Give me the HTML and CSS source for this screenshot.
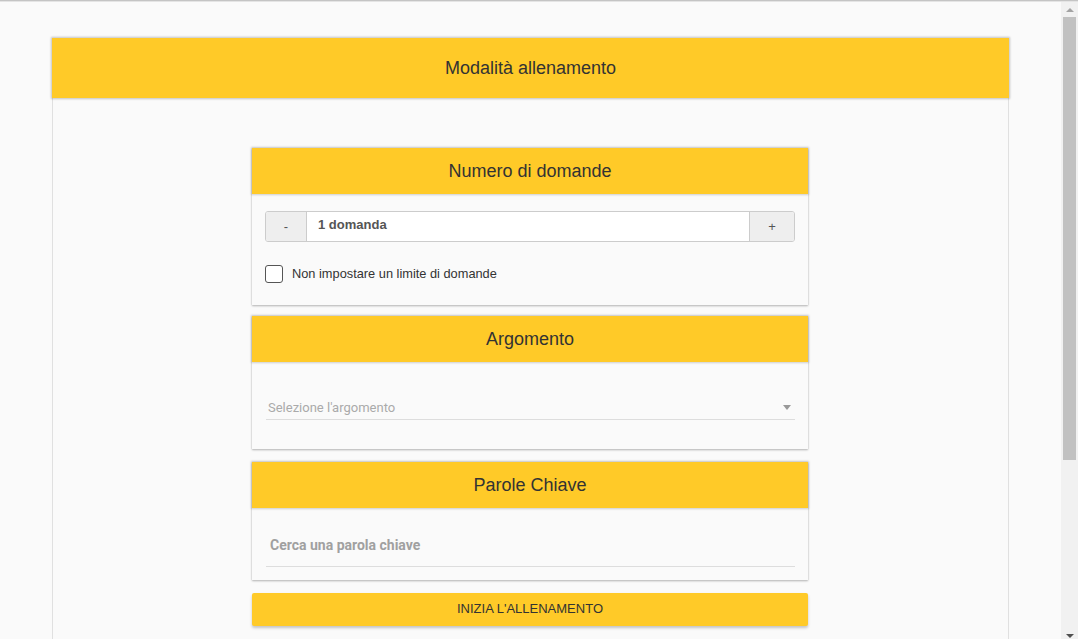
FILE: index.html
```html
<!DOCTYPE html>
<html lang="it">
<head>
<meta charset="utf-8">
<title>Modalità allenamento</title>
<link rel="stylesheet" href="styles.css">
</head>
<body>
<div class="topline"></div>
<div class="viewport">
  <main class="main">
    <section class="outer">
      <header class="outer-head">Modalità allenamento</header>
      <div class="outer-body">
        <div class="column">
          <section class="card">
            <header class="card-head">Numero di domande</header>
            <div class="card-body body-num">
              <div class="input-group">
                <button class="ig-btn ig-minus">-</button>
                <div class="ig-field">1 domanda</div>
                <button class="ig-btn ig-plus">+</button>
              </div>
              <label class="check-row">
                <span class="checkbox"></span>
                <span class="check-label">Non impostare un limite di domande</span>
              </label>
            </div>
          </section>
          <section class="card card-gap">
            <header class="card-head">Argomento</header>
            <div class="card-body body-arg">
              <div class="select">
                <span class="select-text">Selezione l'argomento</span>
                <span class="caret"></span>
              </div>
            </div>
          </section>
          <section class="card card-gap2">
            <header class="card-head">Parole Chiave</header>
            <div class="card-body body-key">
              <div class="search">Cerca una parola chiave</div>
            </div>
          </section>
          <button class="start">INIZIA L'ALLENAMENTO</button>
        </div>
      </div>
    </section>
  </main>
  <aside class="scrollbar">
    <span class="sb-up"></span>
    <span class="sb-thumb"></span>
    <span class="sb-fill"></span>
    <span class="sb-down"></span>
  </aside>
</div>
</body>
</html>
```
FILE: styles.css
```css
html, body {
  margin: 0;
  padding: 0;
  height: 639px;
  overflow: hidden;
}
body {
  background: #fafafa;
  font-family: "Liberation Sans", Arial, sans-serif;
  color: #333;
  display: flex;
  flex-direction: column;
}
.topline {
  height: 1px;
  border-top: 1px solid #c4c4c4;
  background: #e4e4e4;
  flex: none;
}
.viewport {
  flex: 1;
  display: flex;
  min-height: 0;
}
.main {
  flex: 1;
  padding: 36px 52px 0 52px;
  overflow: hidden;
}
.outer {
  display: flex;
  flex-direction: column;
  height: 100%;
}
.outer-head {
  height: 60px;
  background: #ffca28;
  display: flex;
  align-items: center;
  justify-content: center;
  font-size: 18px;
  color: #333;
  box-shadow: 0 0 2px 1px rgba(0,0,0,0.22);
  position: relative;
  z-index: 1;
}
.outer-body {
  flex: 1;
  border-left: 1px solid #e0e0e0;
  border-right: 1px solid #e0e0e0;
  padding-top: 50px;
}
.column {
  width: 556px;
  margin-left: 199px;
  display: flex;
  flex-direction: column;
}
.card {
  background: #fafafa;
  box-shadow: 0 1px 2px rgba(0,0,0,0.28), 0 0 1px rgba(0,0,0,0.12);
}
.card-gap { margin-top: 11px; }
.card-gap2 { margin-top: 13px; }
.card-head {
  height: 46px;
  background: #ffca28;
  display: flex;
  align-items: center;
  justify-content: center;
  font-size: 18px;
  color: #333;
  box-shadow: 0 0 2px 1px rgba(0,0,0,0.18);
  position: relative;
}
.card-body {
  padding: 0 13px;
}
.body-num {
  padding-top: 17px;
  padding-bottom: 22px;
}
.input-group {
  display: flex;
  height: 31px;
  border: 1px solid #ccc;
  border-radius: 3px;
  box-sizing: border-box;
  background: #fff;
  overflow: hidden;
}
.ig-btn {
  border: none;
  background: #eee;
  color: #555;
  font-family: "Liberation Sans", Arial, sans-serif;
  font-size: 13px;
  padding: 0;
  margin: 0;
}
.ig-minus {
  width: 41px;
  border-right: 1px solid #ccc;
}
.ig-plus {
  width: 45px;
  border-left: 1px solid #ccc;
}
.ig-field {
  flex: 1;
  display: flex;
  align-items: center;
  padding-left: 11px;
  padding-bottom: 4px;
  font-size: 13px;
  font-weight: bold;
  color: #555;
}
.check-row {
  display: flex;
  align-items: center;
  margin-top: 23px;
  height: 18px;
}
.checkbox {
  width: 18px;
  height: 18px;
  box-sizing: border-box;
  border: 1.5px solid #555;
  border-radius: 3px;
  background: #fff;
}
.check-label {
  margin-left: 9px;
  font-size: 12.8px;
  color: #333;
  margin-top: -1px;
}
.body-arg {
  padding-top: 36px;
  padding-bottom: 29px;
  padding-left: 14px;
}
.select {
  height: 22px;
  box-sizing: border-box;
  border-bottom: 1px solid #ddd;
  display: flex;
  align-items: center;
  justify-content: space-between;
  padding-left: 2px;
  padding-bottom: 2px;
}
.select-text {
  font-family: Roboto, "Liberation Sans", sans-serif;
  font-size: 13px;
  color: #aaa;
}
.caret {
  width: 0;
  height: 0;
  border-left: 4px solid transparent;
  border-right: 4px solid transparent;
  border-top: 5px solid #999;
  margin-right: 4px;
}
.body-key {
  padding-top: 24px;
  padding-bottom: 13px;
  padding-left: 14px;
}
.search {
  height: 35px;
  box-sizing: border-box;
  border-bottom: 1px solid #ddd;
  display: flex;
  align-items: center;
  padding-left: 4px;
  padding-bottom: 8px;
  font-family: Roboto, "Liberation Sans", sans-serif;
  font-size: 14px;
  font-weight: bold;
  color: #a0a0a0;
}
.start {
  margin-top: 13px;
  height: 33px;
  border: none;
  border-radius: 2px;
  background: #ffca28;
  color: #333;
  font-family: "Liberation Sans", Arial, sans-serif;
  font-size: 13px;
  box-shadow: 0 2px 3px rgba(0,0,0,0.22);
  padding: 0 0 2px 0;
}
.scrollbar {
  width: 17px;
  flex: none;
  background: #f1f1f1;
  display: flex;
  flex-direction: column;
  align-items: center;
}
.sb-up {
  margin-top: 6px;
  width: 0;
  height: 0;
  border-left: 4px solid transparent;
  border-right: 4px solid transparent;
  border-bottom: 4px solid #a3a3a3;
}
.sb-thumb {
  margin-top: 5px;
  width: 13px;
  height: 443px;
  background: #c1c1c1;
}
.sb-fill {
  flex: 1;
}
.sb-down {
  width: 0;
  height: 0;
  border-left: 4px solid transparent;
  border-right: 4px solid transparent;
  border-top: 4px solid #505050;
  margin-bottom: 1px;
}
```
